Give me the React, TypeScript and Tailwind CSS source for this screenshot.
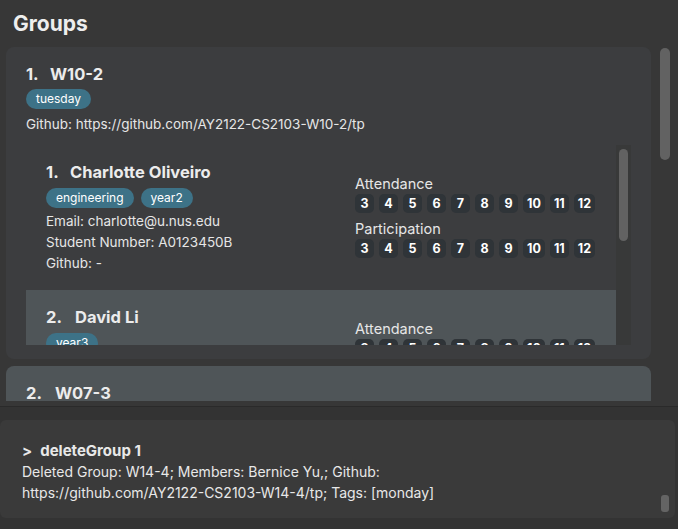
import React from 'react';

type Member = {
  name: string;
  tags: string[];
  email: string;
  studentNumber: string;
  github: string;
  selected?: boolean;
};

const weeks = ['3', '4', '5', '6', '7', '8', '9', '10', '11', '12'];

const members: Member[] = [
  {
    name: 'Charlotte Oliveiro',
    tags: ['engineering', 'year2'],
    email: 'charlotte@u.nus.edu',
    studentNumber: 'A0123450B',
    github: '-',
  },
  {
    name: 'David Li',
    tags: ['year3'],
    email: 'david@u.nus.edu',
    studentNumber: 'A0123451C',
    github: '-',
    selected: true,
  },
];

const Tag: React.FC<{ label: string }> = ({ label }) => (
  <span className="h-[20px] px-[10px] rounded-full bg-[#3d7287] text-white text-[12px] leading-[20px]">
    {label}
  </span>
);

const WeekRow: React.FC = () => (
  <div className="flex gap-[5px] h-[19px]">
    {weeks.map((w) => (
      <span
        key={w}
        className="h-[19px] min-w-[19px] px-[4px] rounded-[5px] bg-[#2f3438] text-white text-[12.5px] font-bold leading-[19px] text-center"
      >
        {w}
      </span>
    ))}
  </div>
);

const MemberCard: React.FC<{ m: Member; index: number }> = ({ m, index }) => (
  <div
    className={`flex items-center pl-[20px] pt-[16px] pb-[16px] ${m.selected ? 'bg-[#4f5558]' : 'bg-[#3c3d3f]'}`}
  >
    <div className="w-[309px] shrink-0">
      <div className="flex text-[16.5px] font-bold leading-[22px] text-[#ececec]">
        <span className={index === 1 ? 'w-[24px]' : 'w-[29px]'}>{index}.</span>
        <span>{m.name}</span>
      </div>
      <div className="flex gap-[7px] mt-[5px]">
        {m.tags.map((t) => (
          <Tag key={t} label={t} />
        ))}
      </div>
      <div className="mt-[3px] text-[13.5px] leading-[21px] text-[#e6e6e6]">
        <div>Email: {m.email}</div>
        <div>Student Number: {m.studentNumber}</div>
        <div>Github: {m.github}</div>
      </div>
    </div>
    <div className="text-[#e6e6e6] mb-[4px]">
      <div className="text-[14.5px] leading-[20px]">Attendance</div>
      <WeekRow />
      <div className="text-[14.5px] leading-[20px] mt-[6px]">Participation</div>
      <WeekRow />
    </div>
  </div>
);

export default function App() {
  return (
    <div
      className="w-[678px] h-[529px] bg-[#373737] flex flex-col overflow-hidden"
      style={{ fontFamily: 'Inter, "Noto Sans", sans-serif' }}
    >
      <div className="h-[406px] flex flex-col shrink-0">
        <h1 className="h-[47px] pl-[13px] pt-[10px] text-[21px] font-bold leading-[28px] text-[#eeeeee]">
          Groups
        </h1>
        <div className="flex h-[354px]">
          <div className="w-[651px] pl-[6px] flex flex-col gap-[7px] overflow-hidden">
            <div className="shrink-0 rounded-[8px] bg-[#3c3d3f] pl-[20px] pr-[20px] pt-[16px] pb-[14px]">
              <div className="flex text-[16.5px] font-bold leading-[22px] text-[#ececec]">
                <span className="w-[24px]">1.</span>
                <span>W10-2</span>
              </div>
              <div className="flex mt-[4px]">
                <Tag label="tuesday" />
              </div>
              <div className="mt-[5px] text-[13.5px] leading-[20px] text-[#e6e6e6]">
                Github: https://github.com/AY2122-CS2103-W10-2/tp
              </div>
              <div className="mt-[11px] h-[200px] flex overflow-hidden">
                <div className="w-[590px] overflow-hidden">
                  {members.map((m, i) => (
                    <MemberCard key={m.name} m={m} index={i + 1} />
                  ))}
                </div>
                <div className="w-[15px] bg-[#383939] pt-[4px] flex justify-center">
                  <div className="w-[9px] h-[92px] rounded-full bg-[#626262]" />
                </div>
              </div>
            </div>
            <div className="shrink-0 h-[80px] rounded-[8px] bg-[#4f5558] pl-[20px] pt-[16px]">
              <div className="flex text-[16.5px] font-bold leading-[22px] text-[#ececec]">
                <span className="w-[29px]">2.</span>
                <span>W07-3</span>
              </div>
            </div>
          </div>
          <div className="flex-1 flex justify-center pt-[1px]">
            <div className="w-[10px] h-[112px] rounded-full bg-[#626262]" />
          </div>
        </div>
      </div>
      <div className="h-[1px] bg-[#2a2a2a] shrink-0" />
      <div className="flex-1 bg-[#333333] pt-[13px] pr-[3px]">
        <div className="h-[98px] rounded-[6px] bg-[#3a3a3a] flex pl-[22px] pt-[20px]">
          <div className="flex-1 text-[14px] leading-[21px] text-[#e8e8e8]">
            <div className="font-bold text-[15px]">
              <span className="mr-[8px]">&gt;</span>deleteGroup 1
            </div>
            <div>Deleted Group: W14-4; Members: Bernice Yu,; Github:</div>
            <div>https://github.com/AY2122-CS2103-W14-4/tp; Tags: [monday]</div>
          </div>
          <div className="w-[20px] flex justify-center pt-[55px]">
            <div className="w-[8px] h-[17px] rounded-[3px] bg-[#646464]" />
          </div>
        </div>
      </div>
    </div>
  );
}
